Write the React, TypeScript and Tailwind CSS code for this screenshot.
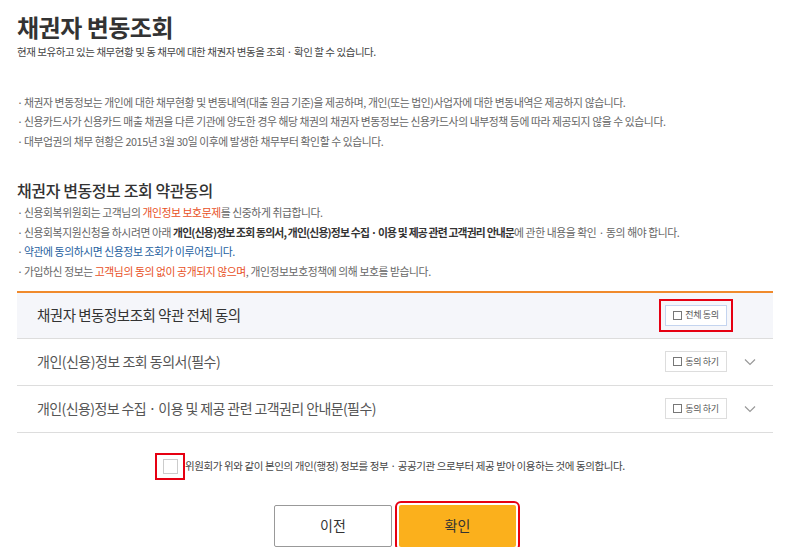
import React, { useState } from 'react';

const font = { fontFamily: '"Noto Sans CJK KR", "Noto Sans", sans-serif' };

const Bullet: React.FC<{ children: React.ReactNode }> = ({ children }) => (
  <li className="flex h-[19.5px] items-center text-[10.8px] tracking-[-0.4px] text-[#666]">
    <span className="w-[7px] shrink-0">·</span>
    <span>{children}</span>
  </li>
);

const Chevron = () => (
  <svg width="12" height="8" viewBox="0 0 12 8" fill="none" className="ml-[17px]">
    <path d="M1 1.5l5 5 5-5" stroke="#999" strokeWidth="1.2" />
  </svg>
);

const AgreeBox: React.FC<{ label: string; active?: boolean; checked: boolean; onClick: () => void }> = ({
  label,
  active,
  checked,
  onClick,
}) => (
  <button
    onClick={onClick}
    className={`flex h-[21px] w-[62px] items-center justify-center gap-[3px] border bg-white text-[9px] tracking-[-0.3px] text-[#555] ${
      active ? 'border-[#c4d4ef] outline-2 outline-offset-[4px] outline-[#e60012]' : 'border-[#ddd]'
    }`}
  >
    <span className="flex h-[9px] w-[9px] items-center justify-center border border-[#777] text-[7px] leading-none">
      {checked ? '✓' : ''}
    </span>
    {label}
  </button>
);

export default function App() {
  const [all, setAll] = useState(false);
  const [a, setA] = useState(false);
  const [b, setB] = useState(false);
  const [gov, setGov] = useState(false);

  return (
    <div className="w-[800px] bg-white pl-[17px] pr-[27px] text-[#333]" style={font}>
      <h1 className="pt-[11px] text-[24px] font-bold leading-[32px] tracking-[-0.5px] text-[#333]">채권자 변동조회</h1>
      <p className="mt-[1px] text-[10.5px] leading-[16px] tracking-[-0.45px] text-[#444]">
        현재 보유하고 있는 채무현황 및 동 채무에 대한 채권자 변동을 조회 · 확인 할 수 있습니다.
      </p>

      <ul className="mt-[32px]">
        <Bullet>
          채권자 변동정보는 개인에 대한 채무현황 및 변동내역(대출 원금 기준)을 제공하며, 개인(또는 법인)사업자에 대한 변동내역은 제공하지 않습니다.
        </Bullet>
        <Bullet>
          신용카드사가 신용카드 매출 채권을 다른 기관에 양도한 경우 해당 채권의 채권자 변동정보는 신용카드사의 내부정책 등에 따라 제공되지 않을 수 있습니다.
        </Bullet>
        <Bullet>대부업권의 채무 현황은 2015년 3월 30일 이후에 발생한 채무부터 확인할 수 있습니다.</Bullet>
      </ul>

      <h2 className="mt-[28px] text-[16px] font-medium leading-[22px] tracking-[-0.4px] text-[#333]">
        채권자 변동정보 조회 약관동의
      </h2>
      <ul className="mt-[2px]">
        <Bullet>
          신용회복위원회는 고객님의 <span className="text-[#e8501e]">개인정보 보호문제</span>를 신중하게 취급합니다.
        </Bullet>
        <Bullet>
          신용회복지원신청을 하시려면 아래{' '}
          <b className="font-bold tracking-[-0.8px] text-[#333]">
            개인(신용)정보 조회 동의서, 개인(신용)정보 수집 · 이용 및 제공 관련 고객권리 안내문
          </b>
          에 관한 내용을 확인 · 동의 해야 합니다.
        </Bullet>
        <Bullet>
          <span className="text-[#1f5fa0]">약관에 동의하시면 신용정보 조회가 이루어집니다.</span>
        </Bullet>
        <Bullet>
          가입하신 정보는 <span className="text-[#e8501e]">고객님의 동의 없이 공개되지 않으며</span>, 개인정보보호정책에 의해 보호를 받습니다.
        </Bullet>
      </ul>

      <div className="mt-[10px] border-t-2 border-[#f08a2c]">
        <div className="flex h-[46px] items-center justify-between border-b border-[#ddd] bg-[#f5f6fa] pl-[20px] pr-[46px]">
          <span className="text-[14.5px] tracking-[-0.5px] text-[#333]">채권자 변동정보조회 약관 전체 동의</span>
          <AgreeBox
            label="전체 동의"
            active
            checked={all}
            onClick={() => {
              setAll(!all);
              setA(!all);
              setB(!all);
            }}
          />
        </div>
        <div className="flex h-[47px] items-center justify-between border-b border-[#ddd] pl-[20px] pr-[17px]">
          <span className="text-[14px] tracking-[-0.5px] text-[#555]">개인(신용)정보 조회 동의서(필수)</span>
          <div className="flex items-center">
            <AgreeBox label="동의 하기" checked={a} onClick={() => setA(!a)} />
            <Chevron />
          </div>
        </div>
        <div className="flex h-[47px] items-center justify-between border-b border-[#ddd] pl-[20px] pr-[17px]">
          <span className="text-[14px] tracking-[-0.6px] text-[#555]">
            개인(신용)정보 수집 · 이용 및 제공 관련 고객권리 안내문(필수)
          </span>
          <div className="flex items-center">
            <AgreeBox label="동의 하기" checked={b} onClick={() => setB(!b)} />
            <Chevron />
          </div>
        </div>
      </div>

      <div className="mt-[20px] flex items-center justify-center pr-[10px]">
        <button
          onClick={() => setGov(!gov)}
          className="flex h-[27px] w-[30px] items-center justify-center border-2 border-[#e60012]"
        >
          <span className="flex h-[15px] w-[15px] items-center justify-center border border-[#ccc] bg-white text-[10px] text-[#333]">
            {gov ? '✓' : ''}
          </span>
        </button>
        <span className="text-[10.5px] tracking-[-0.4px] text-[#444]">
          위원회가 위와 같이 본인의 개인(행정) 정보를 정부 · 공공기관 으로부터 제공 받아 이용하는 것에 동의합니다.
        </span>
      </div>

      <div className="mt-[25px] flex justify-center gap-[7px]">
        <button className="h-[42px] w-[118px] rounded-[2px] border border-[#999] bg-white text-[14px] text-[#333]">
          이전
        </button>
        <button className="h-[42px] w-[117px] rounded-[2px] bg-[#fbb01c] text-[14px] text-[#333] outline-2 outline-offset-[2px] outline-[#e60012]">
          확인
        </button>
      </div>
    </div>
  );
}
